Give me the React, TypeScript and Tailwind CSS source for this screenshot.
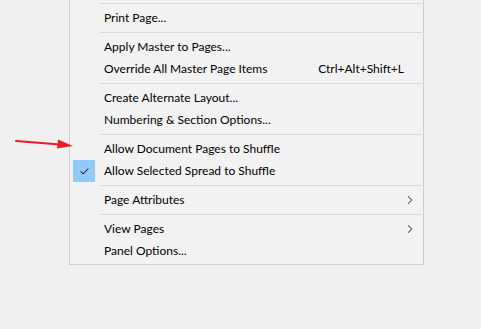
import { Check, ChevronRight } from 'lucide-react';

type Entry =
  | { kind: 'sep' }
  | { kind: 'item'; label: string; shortcut?: string; sub?: boolean; checked?: boolean };

const entries: Entry[] = [
  { kind: 'sep' },
  { kind: 'item', label: 'Print Page...' },
  { kind: 'sep' },
  { kind: 'item', label: 'Apply Master to Pages...' },
  { kind: 'item', label: 'Override All Master Page Items', shortcut: 'Ctrl+Alt+Shift+L' },
  { kind: 'sep' },
  { kind: 'item', label: 'Create Alternate Layout...' },
  { kind: 'item', label: 'Numbering & Section Options...' },
  { kind: 'sep' },
  { kind: 'item', label: 'Allow Document Pages to Shuffle' },
  { kind: 'item', label: 'Allow Selected Spread to Shuffle', checked: true },
  { kind: 'sep' },
  { kind: 'item', label: 'Page Attributes', sub: true },
  { kind: 'sep' },
  { kind: 'item', label: 'View Pages', sub: true },
  { kind: 'item', label: 'Panel Options...' },
];

function MenuRow({ e }: { e: Extract<Entry, { kind: 'item' }> }) {
  return (
    <div className="h-[22px] flex items-center">
      <div className="w-[31px] pl-[3px] flex items-center">
        {e.checked && (
          <span className="w-[22px] h-[22px] bg-[#91c9f7] flex items-center justify-center">
            <Check className="w-[11px] h-[11px] text-[#2b2b2b]" strokeWidth={2.2} />
          </span>
        )}
      </div>
      <span className="pl-[3px] flex-1 text-black">{e.label}</span>
      {e.shortcut && <span className="pr-[19px] text-black">{e.shortcut}</span>}
      {e.sub && <ChevronRight className="w-[14px] h-[14px] mr-[6px] text-[#444]" strokeWidth={1.8} />}
    </div>
  );
}

export default function App() {
  return (
    <div className="relative w-[481px] h-[329px] bg-[#f0f0f0] overflow-hidden" style={{ fontFamily: 'Lato, "Noto Sans", sans-serif' }}>
      <div className="ml-[69px] w-[355px] border-x border-b border-[#cccccc] bg-[#f2f2f2] pb-[2px] text-[12px]">
        {entries.map((e, i) =>
          e.kind === 'sep' ? (
            <div key={i} className="h-[7px] flex items-center pl-[30px] pr-[1px]">
              <div className="h-px w-full bg-[#d7d7d7]" />
            </div>
          ) : (
            <MenuRow key={i} e={e} />
          )
        )}
      </div>

      {/* annotation arrow */}
      <svg className="absolute left-0 top-0" width="481" height="329" viewBox="0 0 481 329">
        <line x1="16" y1="141" x2="60" y2="144.5" stroke="#ec1c24" strokeWidth="2.2" strokeLinecap="round" />
        <polygon points="58,139.5 73,146 57,148.5" fill="#ec1c24" />
      </svg>
    </div>
  );
}
